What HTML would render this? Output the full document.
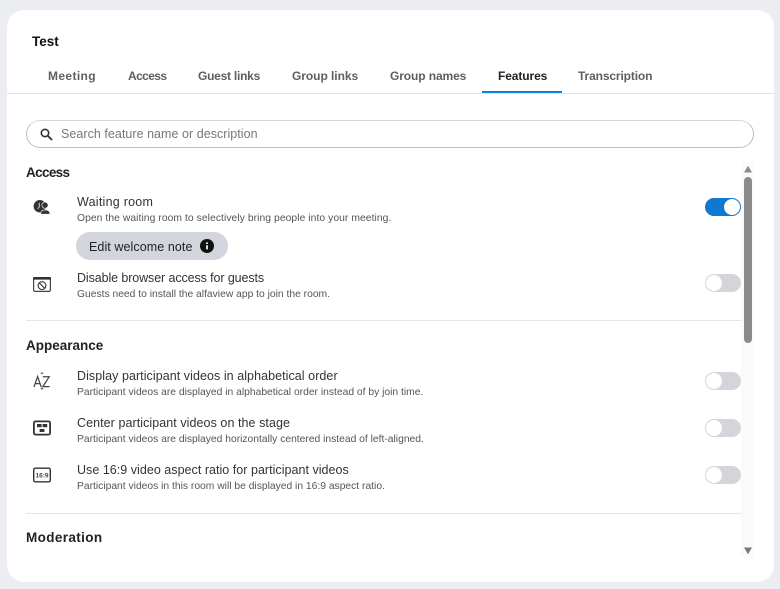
<!DOCTYPE html>
<html><head><meta charset="utf-8"><style>
html,body{margin:0;padding:0;width:780px;height:589px;overflow:hidden;background:#ebedf1;font-family:"Liberation Sans",sans-serif;color:#1e1e1e}
.a{position:absolute;white-space:nowrap}
#card{position:absolute;left:7px;top:10px;width:767px;height:572px;background:#fff;border-radius:17px}
.tab{font-size:12px;font-weight:700;color:#5f5f5f;top:68px;line-height:16px}
.h{font-size:13.5px;font-weight:700;color:#222;left:26px;line-height:18px}
.t{font-size:12.5px;color:#333;left:77px;line-height:16px}
.d{font-size:10.3px;color:#555;left:77px;line-height:13px}
.sw{position:absolute;left:705px;width:36px;height:18px;border-radius:9px;background:#d3d5da}
.sw i{position:absolute;left:1px;top:1px;width:16px;height:16px;border-radius:50%;background:#fff}
.sw.on{background:#0f78cf}.sw.on i{left:19px}
.hr{position:absolute;left:26px;width:715px;height:1px;background:#e6e6e8}
svg{position:absolute;overflow:visible}
</style></head><body>
<div id="card"></div>
<div class="a" style="left:32px;top:33px;font-size:13.5px;font-weight:700;color:#111;line-height:18px">Test</div>
<div class="a tab" style="left:48px;letter-spacing:.37px">Meeting</div>
<div class="a tab" style="left:128px;letter-spacing:-.6px">Access</div>
<div class="a tab" style="left:198px;letter-spacing:-.24px">Guest links</div>
<div class="a tab" style="left:292px;letter-spacing:-.05px">Group links</div>
<div class="a tab" style="left:390px;letter-spacing:-.1px">Group names</div>
<div class="a tab" style="left:498px;color:#222;letter-spacing:-.1px">Features</div>
<div class="a tab" style="left:578px;letter-spacing:-.13px">Transcription</div>
<div class="a" style="left:7px;top:93px;width:767px;height:1px;background:#e2e2e4"></div>
<div class="a" style="left:482px;top:91px;width:80px;height:2px;background:#0f82d8"></div>

<div class="a" style="left:26px;top:120px;width:726px;height:26px;border:1px solid #bdbdbd;border-top-color:#d6d6d6;border-radius:14px"></div>
<svg style="left:40px;top:128px" width="13" height="13" viewBox="0 0 13 13"><circle cx="5" cy="5" r="3.7" fill="none" stroke="#333" stroke-width="1.6"/><path d="M8 8l4 4" stroke="#333" stroke-width="1.9"/></svg>
<div class="a" style="left:61px;top:126px;font-size:12.5px;line-height:16px;color:#777;letter-spacing:.04px">Search feature name or description</div>

<div class="a h" style="top:164px;letter-spacing:-.65px">Access</div>
<svg style="left:33px;top:199px" width="18" height="18" viewBox="0 0 18 18"><circle cx="6.8" cy="7.2" r="6.2" fill="#333"/><path d="M6.3 3.8v4.2L4.6 9.8" stroke="#ddd" stroke-width=".9" fill="none"/><circle cx="12" cy="6.2" r="3.1" fill="#333" stroke="#fff" stroke-width=".6"/><path d="M7.6 15.2c0-3 1.6-4.3 4.7-4.3s4.7 1.3 4.7 4.3z" fill="#333" stroke="#fff" stroke-width=".6"/></svg>
<div class="a t" style="top:194px;letter-spacing:.25px">Waiting room</div>
<div class="a d" style="top:212px;letter-spacing:.07px">Open the waiting room to selectively bring people into your meeting.</div>
<div class="sw on" style="top:198px"><i></i></div>
<div class="a" style="left:76px;top:232px;width:152px;height:28px;border-radius:14px;background:#d2d5dc"></div>
<div class="a" style="left:89px;top:239px;font-size:12.5px;line-height:16px;color:#222;letter-spacing:.08px">Edit welcome note</div>
<svg style="left:200px;top:239px" width="14" height="14" viewBox="0 0 14 14"><circle cx="7" cy="7" r="7" fill="#111"/><path d="M7 6.2v4.2M7 3.4v1.6" stroke="#fff" stroke-width="1.7"/></svg>

<svg style="left:33px;top:276px" width="18" height="16" viewBox="0 0 18 16"><rect x=".6" y="1.6" width="16.8" height="13.8" rx="1.5" fill="none" stroke="#444" stroke-width="1.2"/><rect x="0" y="1" width="18" height="2.6" rx="1" fill="#333"/><circle cx="9" cy="9.6" r="3.9" fill="none" stroke="#333" stroke-width="1.1"/><path d="M6.3 6.9l5.4 5.4" stroke="#333" stroke-width="1.1"/></svg>
<div class="a t" style="top:270px;letter-spacing:-.1px">Disable browser access for guests</div>
<div class="a d" style="top:288px">Guests need to install the alfaview app to join the room.</div>
<div class="sw" style="top:274px"><i></i></div>
<div class="hr" style="top:320px"></div>

<div class="a h" style="top:337px">Appearance</div>
<svg style="left:33px;top:372px" width="18" height="18" viewBox="0 0 18 18" fill="none" stroke="#444" stroke-width="1.25"><path d="M1 15L4.6 4.5 8.2 15M2.2 11.6h4.8"/><path d="M9.8 4.8h6.4L9.8 14.6h6.8"/><path d="M8 1.8l1-1 1 1M8 16l1 1 1-1" stroke-width="1"/></svg>
<div class="a t" style="top:368px;letter-spacing:.06px">Display participant videos in alphabetical order</div>
<div class="a d" style="top:386px">Participant videos are displayed in alphabetical order instead of by join time.</div>
<div class="sw" style="top:372px"><i></i></div>

<svg style="left:33px;top:420px" width="18" height="16" viewBox="0 0 18 16"><rect x=".9" y="1.4" width="16.2" height="13.2" rx="1.5" fill="none" stroke="#333" stroke-width="1.8"/><rect x="4" y="4" width="4.6" height="3.2" fill="#333"/><rect x="9.6" y="4" width="4.6" height="3.2" fill="#333"/><rect x="6.6" y="9" width="4.8" height="3" fill="#333"/></svg>
<div class="a t" style="top:415px;letter-spacing:.065px">Center participant videos on the stage</div>
<div class="a d" style="top:433px">Participant videos are displayed horizontally centered instead of left-aligned.</div>
<div class="sw" style="top:419px"><i></i></div>

<svg style="left:33px;top:467px" width="18" height="16" viewBox="0 0 18 16"><rect x=".7" y="1.2" width="16.6" height="13.6" rx="1.5" fill="none" stroke="#333" stroke-width="1.4"/><text x="9" y="10.6" font-family="Liberation Sans" font-size="6.5" font-weight="700" fill="#444" text-anchor="middle">16:9</text></svg>
<div class="a t" style="top:462px;letter-spacing:.03px">Use 16:9 video aspect ratio for participant videos</div>
<div class="a d" style="top:480px">Participant videos in this room will be displayed in 16:9 aspect ratio.</div>
<div class="sw" style="top:466px"><i></i></div>
<div class="hr" style="top:513px"></div>

<div class="a h" style="top:529px;letter-spacing:.37px">Moderation</div>

<div class="a" style="left:741px;top:162px;width:13px;height:395px;background:#fafafa"></div>
<div class="a" style="left:744px;top:177px;width:8px;height:166px;border-radius:4px;background:#8b8b8b"></div>
<svg style="left:743px;top:165px" width="10" height="8"><path d="M1 7.5L5 .8 9 7.5z" fill="#8b8b8b"/></svg>
<svg style="left:743px;top:547px" width="10" height="8"><path d="M1 .5L5 7.2 9 .5z" fill="#777"/></svg>
</body></html>
